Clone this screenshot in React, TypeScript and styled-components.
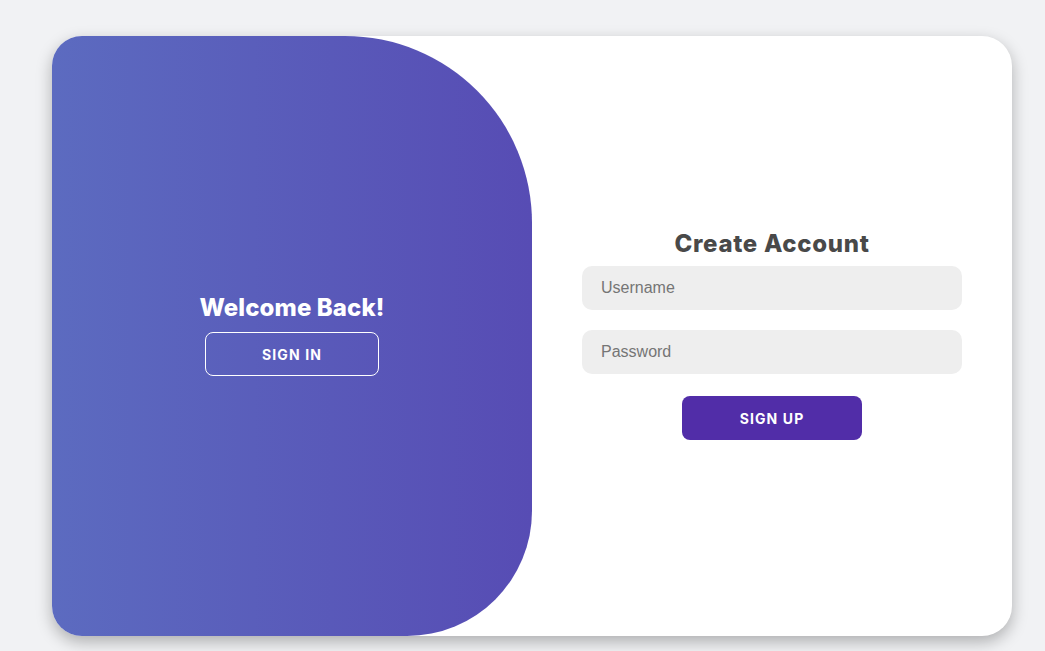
import React from "react";
import styled, { createGlobalStyle } from "styled-components";

const GlobalStyle = createGlobalStyle`
  html, body {
    margin: 0;
    padding: 0;
    background: #f1f2f4;
  }
  * { box-sizing: border-box; }
`;

const Page = styled.div`
  width: 1045px;
  height: 651px;
  padding: 36px 0 0 52px;
  background: #f1f2f4;
  overflow: hidden;
`;

const Card = styled.div`
  width: 960px;
  height: 600px;
  display: grid;
  grid-template-columns: 480px 480px;
  background: #ffffff;
  border-radius: 30px;
  overflow: hidden;
  box-shadow: 0 6px 16px rgba(0, 0, 0, 0.28);
`;

const TogglePanel = styled.div`
  display: flex;
  flex-direction: column;
  align-items: center;
  justify-content: center;
  background: linear-gradient(to right, #5c6bc0, #574cb4);
  border-radius: 0 187px 125px 0;
  color: #ffffff;
  font-family: "Inter", "Roboto", sans-serif;
  padding-bottom: 2px;
`;

const Title = styled.h1<{ $light?: boolean }>`
  margin: 0;
  font-family: "Inter", "Roboto", sans-serif;
  font-weight: 800;
  font-size: 24px;
  letter-spacing: ${(p) => (p.$light ? "0.1px" : "0.7px")};
  line-height: 28px;
  color: ${(p) => (p.$light ? "#ffffff" : "#494949")};
`;

const Button = styled.button<{ $ghost?: boolean }>`
  height: 44px;
  width: ${(p) => (p.$ghost ? "174px" : "180px")};
  border-radius: 8px;
  border: 1px solid ${(p) => (p.$ghost ? "#ffffff" : "transparent")};
  background: ${(p) => (p.$ghost ? "transparent" : "#512da8")};
  color: #ffffff;
  font-family: "Inter", "Roboto", sans-serif;
  font-weight: 700;
  font-size: 14px;
  letter-spacing: 1.1px;
  text-transform: uppercase;
  cursor: pointer;
`;

const FormPanel = styled.form`
  display: flex;
  flex-direction: column;
  align-items: center;
  justify-content: center;
  padding: 0 50px 2px;
`;

const Input = styled.input`
  width: 100%;
  height: 44px;
  margin: 10px 0;
  padding: 0 19px;
  border: none;
  border-radius: 10px;
  background: #eeeeee;
  font-family: "Liberation Sans", Arial, sans-serif;
  font-size: 16px;
  color: #333;
  outline: none;
  &::placeholder {
    color: #757575;
  }
`;

const WelcomeButtonWrap = styled.div`
  margin-top: 10px;
`;

const SignUpWrap = styled.div`
  margin-top: 12px;
`;

const TitleWrap = styled.div`
  margin-bottom: -2px;
`;

export default function App() {
  return (
    <>
      <GlobalStyle />
      <Page>
        <Card>
          <TogglePanel>
            <Title $light>Welcome Back!</Title>
            <WelcomeButtonWrap>
              <Button type="button" $ghost>
                Sign In
              </Button>
            </WelcomeButtonWrap>
          </TogglePanel>
          <FormPanel onSubmit={(e) => e.preventDefault()}>
            <TitleWrap>
              <Title>Create Account</Title>
            </TitleWrap>
            <Input type="text" placeholder="Username" />
            <Input type="password" placeholder="Password" />
            <SignUpWrap>
              <Button type="submit">Sign Up</Button>
            </SignUpWrap>
          </FormPanel>
        </Card>
      </Page>
    </>
  );
}
